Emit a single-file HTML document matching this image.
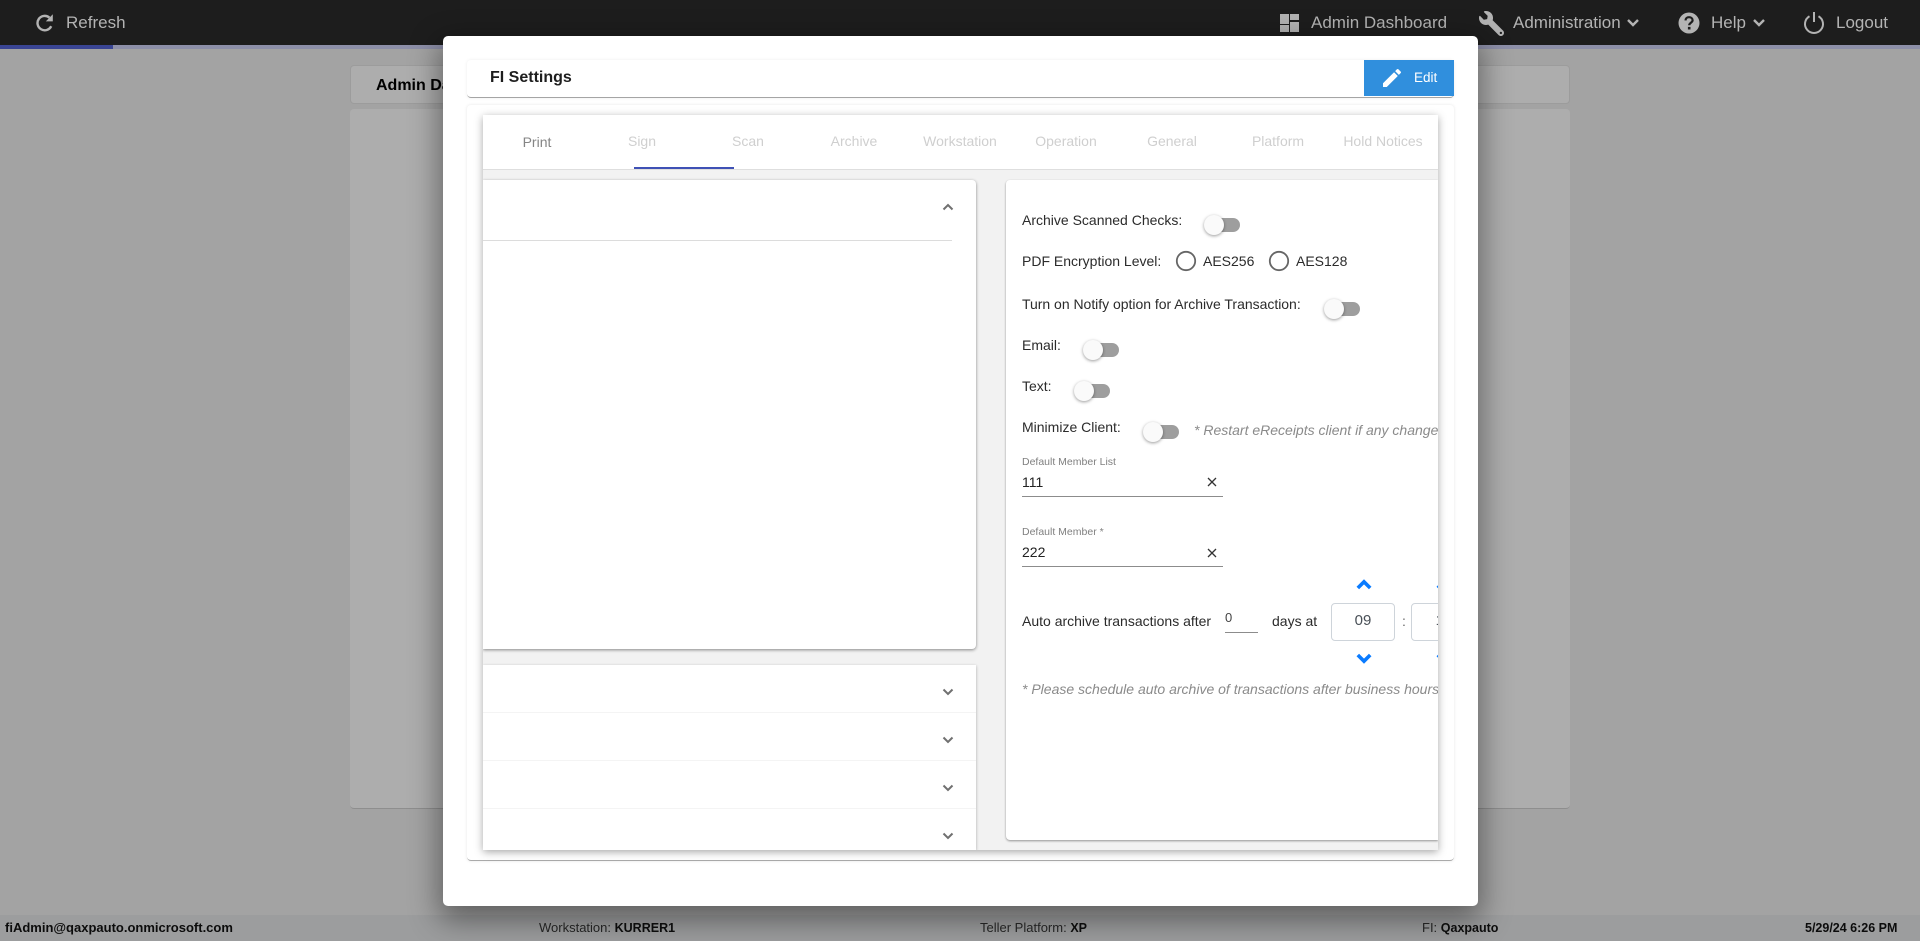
<!DOCTYPE html>
<html lang="en"><head><meta charset="utf-8"><title>FI Settings</title>
<style>
html,body{margin:0;padding:0;width:1920px;height:941px;overflow:hidden;background:#a3a3a3;font-family:"Liberation Sans",sans-serif;}
*{box-sizing:border-box}
.a{position:absolute}
.t{position:absolute;white-space:nowrap;line-height:20px;height:20px;font-size:14px;color:#2b2b2b}
.nav{font-size:17px;color:#b3b3b3}
.tab{font-size:14px;color:#cfcfcf;width:106px;text-align:center}
.thumb{position:absolute;width:20px;height:20px;border-radius:50%;background:#fafafa;box-shadow:0 1px 3px rgba(0,0,0,.4)}
.track{position:absolute;width:34px;height:14px;border-radius:7px;background:#9e9e9e}
.ft{font-size:13px;color:#222}
.ft b{color:#0c0c0c;font-size:12.5px}
.note{font-style:italic;color:#8a8a8a;font-size:14px}
svg{position:absolute;display:block}
</style></head>
<body>
<!-- top bar -->
<div class="a" style="left:0;top:0;width:1920px;height:45px;background:#1d1d1d"></div>
<div class="a" style="left:0;top:45px;width:1920px;height:4px;background:#8d8fa8"></div>
<div class="a" style="left:0;top:45px;width:113px;height:4px;background:#3a4594"></div>

<svg style="left:36px;top:13px" width="18" height="20" viewBox="0 0 18 20"><path d="M15.2 13.2A7.2 7.2 0 1 1 13.4 4.6" fill="none" stroke="#b3b3b3" stroke-width="2.4"/><path d="M16.8 1.2V8.4H9.8Z" fill="#b3b3b3"/></svg>
<div class="t nav" style="left:66px;top:13px">Refresh</div>

<svg style="left:1280px;top:14px" width="19" height="18" viewBox="0 0 19 18" fill="#b3b3b3"><rect x="0" y="0" width="9" height="10"/><rect x="10" y="0" width="9" height="6"/><rect x="0" y="11" width="9" height="7"/><rect x="10" y="8" width="9" height="10"/></svg>
<div class="t nav" style="left:1311px;top:13px">Admin Dashboard</div>

<svg style="left:1479px;top:11px" width="25" height="25" viewBox="0 0 512 512"><path transform="translate(512,0) scale(-1,1)" fill="#b3b3b3" d="M507.73 109.1c-2.24-9.03-13.54-12.09-20.12-5.51l-74.36 74.36-67.88-11.31-11.31-67.88 74.36-74.36c6.62-6.62 3.43-17.9-5.66-20.16-47.38-11.74-99.55.91-136.58 37.93-39.64 39.64-50.55 97.1-34.05 147.2L18.74 402.76c-24.99 24.99-24.99 65.51 0 90.5 24.99 24.99 65.51 24.99 90.5 0l213.21-213.21c50.12 16.71 107.47 5.68 147.37-34.22 37.07-37.07 49.7-89.32 37.91-136.73zM64 472c-13.25 0-24-10.75-24-24 0-13.26 10.75-24 24-24s24 10.74 24 24c0 13.25-10.75 24-24 24z"/></svg>
<div class="t nav" style="left:1513px;top:13px">Administration</div>
<svg style="left:1626px;top:18px" width="14" height="10" viewBox="0 0 14 10"><path d="M2 2L7 7L12 2" fill="none" stroke="#b3b3b3" stroke-width="2.4"/></svg>

<svg style="left:1678px;top:12px" width="22" height="22" viewBox="0 0 22 22"><circle cx="11" cy="11" r="10.5" fill="#b3b3b3"/><path d="M7.5 8.4C7.6 6.4 9 5.2 11 5.2C13.1 5.2 14.6 6.5 14.6 8.2C14.6 10.6 11.2 10.8 11.2 13.2" fill="none" stroke="#1d1d1d" stroke-width="2.2"/><rect x="9.9" y="14.9" width="2.6" height="2.6" fill="#1d1d1d"/></svg>
<div class="t nav" style="left:1711px;top:13px">Help</div>
<svg style="left:1752px;top:18px" width="14" height="10" viewBox="0 0 14 10"><path d="M2 2L7 7L12 2" fill="none" stroke="#b3b3b3" stroke-width="2.4"/></svg>

<svg style="left:1803px;top:10px" width="22" height="24" viewBox="0 0 22 24"><path d="M6.5 6.2A9 9 0 1 0 15.5 6.2" fill="none" stroke="#b3b3b3" stroke-width="2"/><path d="M11 2V12" fill="none" stroke="#b3b3b3" stroke-width="2"/></svg>
<div class="t nav" style="left:1836px;top:13px">Logout</div>

<!-- background page -->
<div class="a" style="left:350px;top:65px;width:1220px;height:39px;background:#adadad;border:1px solid #9c9c9c;border-radius:4px"></div>
<div class="t" style="left:376px;top:76px;font-size:16px;font-weight:bold;color:#000">Admin Dashboard</div>
<div class="a" style="left:350px;top:109px;width:1220px;height:700px;background:#adadad;border-bottom:1px solid #8e8e8e;border-radius:4px"></div>

<!-- footer -->
<div class="a" style="left:0;top:915px;width:1920px;height:26px;background:#9c9d9e"></div>

<!-- modal -->
<div class="a" style="left:443px;top:36px;width:1035px;height:870px;background:#fff;border-radius:5px;box-shadow:0 10px 30px 4px rgba(0,0,0,.42)"></div>

<div class="a" style="left:467px;top:60px;width:987px;height:38px;background:#fff;border-bottom:1px solid #a5a5a5;border-radius:4px;box-shadow:0 0 3px rgba(0,0,0,.08)"></div>
<div class="t" style="left:490px;top:68px;font-weight:bold;font-size:16px;color:#1e1e1e">FI Settings</div>
<div class="a" style="left:1364px;top:60px;width:90px;height:36px;background:#308fdd"></div>
<svg style="left:1380px;top:66px" width="24" height="24" viewBox="0 0 24 24"><path fill="#fff" d="M3 17.25V21h3.75L17.81 9.94l-3.75-3.75L3 17.25zM20.71 7.04c.39-.39.39-1.02 0-1.41l-2.34-2.34c-.39-.39-1.02-.39-1.41 0l-1.83 1.83 3.75 3.75 1.83-1.83z"/></svg>
<div class="t" style="left:1414px;top:68px;font-size:13.5px;color:#fff">Edit</div>

<div class="a" style="left:467px;top:105px;width:987px;height:756px;background:#fff;border-bottom:1px solid #aaa;border-radius:4px;box-shadow:0 0 3px rgba(0,0,0,.1)"></div>

<!-- inner panel -->
<div class="a" style="left:483px;top:115px;width:955px;height:735px;background:#f2f2f2;box-shadow:0 2px 8px rgba(0,0,0,.35);overflow:hidden">
  <div class="a" style="left:0;top:0;width:955px;height:55px;background:#fff;border-bottom:1px solid #dedede"></div>
  <div class="a" style="left:151px;top:52px;width:100px;height:2px;background:#3f51b5"></div>

  <!-- left top accordion -->
  <div class="a" style="left:0;top:65px;width:493px;height:469px;background:#fff;border-radius:0 4px 4px 0;box-shadow:0 1px 3px rgba(0,0,0,.45)"></div>
  <div class="a" style="left:0;top:125px;width:469px;height:1px;background:#dcdcdc"></div>
  <svg style="left:459px;top:87px" width="12" height="10" viewBox="0 0 12 10"><path d="M1.5 7.5L6 3L10.5 7.5" fill="none" stroke="#707070" stroke-width="2"/></svg>

  <!-- left bottom accordion -->
  <div class="a" style="left:0;top:550px;width:493px;height:185px;background:#fff;box-shadow:0 1px 3px rgba(0,0,0,.3)"></div>
  <div class="a" style="left:0;top:597px;width:493px;height:1px;background:#f4f4f4"></div>
  <div class="a" style="left:0;top:645px;width:493px;height:1px;background:#f4f4f4"></div>
  <div class="a" style="left:0;top:693px;width:493px;height:1px;background:#f4f4f4"></div>
  <svg style="left:459px;top:572px" width="12" height="10" viewBox="0 0 12 10"><path d="M1.5 2.5L6 7L10.5 2.5" fill="none" stroke="#707070" stroke-width="2"/></svg>
  <svg style="left:459px;top:620px" width="12" height="10" viewBox="0 0 12 10"><path d="M1.5 2.5L6 7L10.5 2.5" fill="none" stroke="#707070" stroke-width="2"/></svg>
  <svg style="left:459px;top:668px" width="12" height="10" viewBox="0 0 12 10"><path d="M1.5 2.5L6 7L10.5 2.5" fill="none" stroke="#707070" stroke-width="2"/></svg>
  <svg style="left:459px;top:716px" width="12" height="10" viewBox="0 0 12 10"><path d="M1.5 2.5L6 7L10.5 2.5" fill="none" stroke="#707070" stroke-width="2"/></svg>

  <!-- right card -->
  <div class="a" style="left:523px;top:65px;width:432px;height:660px;background:#fff;border-radius:4px 0 0 4px;box-shadow:0 1px 2px rgba(0,0,0,.4)"></div>
</div>

<!-- tabs -->
<div class="t tab" style="left:484px;top:132px;color:#858585">Print</div>
<div class="t tab" style="left:589px;top:131px">Sign</div>
<div class="t tab" style="left:695px;top:131px">Scan</div>
<div class="t tab" style="left:801px;top:131px">Archive</div>
<div class="t tab" style="left:907px;top:131px">Workstation</div>
<div class="t tab" style="left:1013px;top:131px">Operation</div>
<div class="t tab" style="left:1119px;top:131px">General</div>
<div class="t tab" style="left:1225px;top:131px">Platform</div>
<div class="t tab" style="left:1330px;top:131px">Hold Notices</div>

<!-- right card content, clipped at 1438 -->
<div class="a" style="left:1006px;top:180px;width:432px;height:660px;overflow:hidden">
  <div class="t" style="left:16px;top:30px">Archive Scanned Checks:</div>
  <div class="track" style="left:200px;top:38px"></div><div class="thumb" style="left:198px;top:35px"></div>

  <div class="t" style="left:16px;top:71px">PDF Encryption Level:</div>
  <svg style="left:169px;top:70px" width="22" height="22" viewBox="0 0 22 22"><circle cx="11" cy="11" r="9.2" fill="none" stroke="#666" stroke-width="1.8"/></svg>
  <div class="t" style="left:197px;top:71px">AES256</div>
  <svg style="left:262px;top:70px" width="22" height="22" viewBox="0 0 22 22"><circle cx="11" cy="11" r="9.2" fill="none" stroke="#666" stroke-width="1.8"/></svg>
  <div class="t" style="left:290px;top:71px">AES128</div>

  <div class="t" style="left:16px;top:114px;letter-spacing:-.02px">Turn on Notify option for Archive Transaction:</div>
  <div class="track" style="left:320px;top:122px"></div><div class="thumb" style="left:318px;top:119px"></div>

  <div class="t" style="left:16px;top:155px">Email:</div>
  <div class="track" style="left:79px;top:163px"></div><div class="thumb" style="left:77px;top:160px"></div>

  <div class="t" style="left:16px;top:196px">Text:</div>
  <div class="track" style="left:70px;top:204px"></div><div class="thumb" style="left:68px;top:201px"></div>

  <div class="t" style="left:16px;top:237px">Minimize Client:</div>
  <div class="track" style="left:139px;top:245px"></div><div class="thumb" style="left:137px;top:242px"></div>
  <div class="t note" style="left:188px;top:240px">* Restart eReceipts client if any change</div>

  <div class="t" style="left:16px;top:272px;font-size:10.5px;color:#808080">Default Member List</div>
  <div class="t" style="left:16px;top:292px;font-size:14px;color:#222">111</div>
  <svg style="left:200px;top:296px" width="12" height="12" viewBox="0 0 12 12"><path d="M2 2L10 10M10 2L2 10" stroke="#333" stroke-width="1.3" fill="none"/></svg>
  <div class="a" style="left:16px;top:316px;width:201px;height:1px;background:#8c8c8c"></div>

  <div class="t" style="left:16px;top:342px;font-size:10.5px;color:#808080">Default Member *</div>
  <div class="t" style="left:16px;top:362px;font-size:14px;color:#222">222</div>
  <svg style="left:200px;top:367px" width="12" height="12" viewBox="0 0 12 12"><path d="M2 2L10 10M10 2L2 10" stroke="#333" stroke-width="1.3" fill="none"/></svg>
  <div class="a" style="left:16px;top:386px;width:201px;height:1px;background:#8c8c8c"></div>

  <svg style="left:350px;top:399px" width="16" height="12" viewBox="0 0 16 12"><path d="M1.8 9L8 2.8L14.2 9" fill="none" stroke="#0a7bff" stroke-width="3.6"/></svg>
  <svg style="left:430px;top:399px" width="16" height="12" viewBox="0 0 16 12"><path d="M1.8 9L8 2.8L14.2 9" fill="none" stroke="#0a7bff" stroke-width="3.6"/></svg>
  <div class="t" style="left:16px;top:431px">Auto archive transactions after</div>
  <div class="t" style="left:219px;top:428px;font-size:13px;color:#444">0</div>
  <div class="a" style="left:219px;top:452px;width:33px;height:1px;background:#8c8c8c"></div>
  <div class="t" style="left:266px;top:431px">days at</div>
  <div class="a" style="left:325px;top:423px;width:64px;height:38px;border:1px solid #ced4da;border-radius:4px"></div>
  <div class="t" style="left:325px;top:431px;width:64px;text-align:center;font-size:15px;color:#495057">09</div>
  <div class="t" style="left:396px;top:431px;color:#666">:</div>
  <div class="a" style="left:405px;top:423px;width:64px;height:38px;border:1px solid #ced4da;border-radius:4px"></div>
  <div class="t" style="left:406px;top:431px;width:64px;text-align:center;font-size:15px;color:#495057">10</div>
  <svg style="left:350px;top:472px" width="16" height="12" viewBox="0 0 16 12"><path d="M1.8 3L8 9.2L14.2 3" fill="none" stroke="#0a7bff" stroke-width="3.6"/></svg>
  <svg style="left:430px;top:472px" width="16" height="12" viewBox="0 0 16 12"><path d="M1.8 3L8 9.2L14.2 3" fill="none" stroke="#0a7bff" stroke-width="3.6"/></svg>

  <div class="t note" style="left:16px;top:499px">* Please schedule auto archive of transactions after business hours</div>
</div>

<!-- footer text -->
<div class="t ft" style="left:5px;top:918px;font-weight:bold;color:#0c0c0c">fiAdmin@qaxpauto.onmicrosoft.com</div>
<div class="t ft" style="left:539px;top:918px">Workstation: <b>KURRER1</b></div>
<div class="t ft" style="left:980px;top:918px">Teller Platform: <b>XP</b></div>
<div class="t ft" style="left:1422px;top:918px">FI: <b>Qaxpauto</b></div>
<div class="t ft" style="left:1805px;top:918px;font-size:12.5px;font-weight:bold;color:#0c0c0c">5/29/24 6:26 PM</div>
</body></html>
